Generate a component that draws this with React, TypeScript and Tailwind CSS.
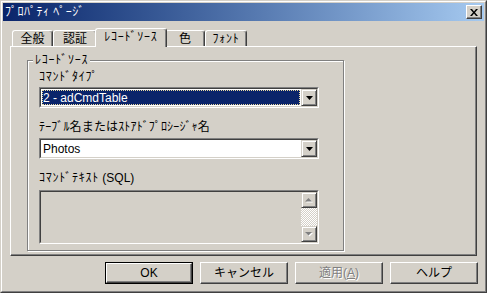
import React from 'react';

const face = 'bg-[#d4d0c8]';

function DownArrow({ disabled = false }: { disabled?: boolean }) {
    if (disabled) {
        return (
            <svg width="8" height="5" viewBox="0 0 8 5">
                <path d="M1 1h7L4.5 4.5z" fill="#ffffff" />
                <path d="M0 0h7L3.5 3.5z" fill="#808080" />
            </svg>
        );
    }
    return (
        <svg width="7" height="4" viewBox="0 0 7 4">
            <path d="M0 0h7L3.5 4z" fill="#000000" />
        </svg>
    );
}

function UpArrow() {
    return (
        <svg width="8" height="5" viewBox="0 0 8 5">
            <path d="M1 4.5h7L4.5 1z" fill="#ffffff" />
            <path d="M0 3.5h7L3.5 0z" fill="#808080" />
        </svg>
    );
}

// raised little button used by combos / scrollbars
function SmallButton({ children, className = '' }: { children: React.ReactNode; className?: string }) {
    return (
        <div
            className={`w-[16px] flex items-center justify-center ${face} border border-t-[#d4d0c8] border-l-[#d4d0c8] border-r-[#404040] border-b-[#404040] shadow-[inset_1px_1px_0_#ffffff,inset_-1px_-1px_0_#808080] ${className}`}
        >
            {children}
        </div>
    );
}

function Sunken({ className = '', children }: { className?: string; children: React.ReactNode }) {
    return (
        <div className={`border border-t-[#808080] border-l-[#808080] border-r-white border-b-white ${className}`}>
            <div className="h-full flex border border-t-[#404040] border-l-[#404040] border-r-[#d4d0c8] border-b-[#d4d0c8]">
                {children}
            </div>
        </div>
    );
}

function Tab({ label, width, active = false, kana = false }: { label: string; width: string; active?: boolean; kana?: boolean }) {
    return (
        <div
            className={`${width} ${
                active ? 'h-[19px] -mb-px -mx-[2px] relative z-10 pb-[3px]' : 'h-[16px]'
            } ${kana ? 'tracking-[0.75px]' : ''} ${face} flex items-center justify-center rounded-t-[3px] border-l border-t border-r border-l-white border-t-white border-r-[#404040] shadow-[inset_-1px_0_0_#808080] leading-[14px]`}
        >
            {label}
        </div>
    );
}

function PushButton({
    children,
    isDefault = false,
    disabled = false,
}: {
    children: React.ReactNode;
    isDefault?: boolean;
    disabled?: boolean;
}) {
    const inner = (
        <div className="h-full flex items-center justify-center border border-t-white border-l-white border-r-[#404040] border-b-[#404040] shadow-[inset_-1px_-1px_0_#808080] leading-[14px]">
            <span className={disabled ? 'text-[#808080] [text-shadow:1px_1px_0_#ffffff]' : ''}>{children}</span>
        </div>
    );
    return (
        <div className={`w-[88px] h-[22px] ${isDefault ? 'border border-black' : ''}`}>{inner}</div>
    );
}

export default function App() {
    return (
        <div className="w-[487px] h-[293px] bg-[#d4d0c8] text-[12px] text-black font-['Liberation_Sans','Noto_Sans_CJK_JP',sans-serif] border border-t-[#d4d0c8] border-l-[#d4d0c8] border-r-[#404040] border-b-[#404040]">
            <div className="h-full border border-t-white border-l-white border-r-[#808080] border-b-[#808080] p-px flex flex-col">
                {/* Title bar */}
                <div className="h-[18px] flex items-center bg-gradient-to-r from-[#0a246a] to-[#a6caf0] pl-[2px] pr-[2px]">
                    <span className="text-white leading-[14px] tracking-[0.5px]">ﾌﾟﾛﾊﾟﾃｨ ﾍﾟｰｼﾞ</span>
                    <div className="ml-auto w-[16px] h-[14px] flex items-center justify-center bg-[#d4d0c8] border border-t-white border-l-white border-r-[#404040] border-b-[#404040] shadow-[inset_-1px_-1px_0_#808080]">
                        <svg width="8" height="7" viewBox="0 0 8 7">
                            <path d="M0 0h2l2 2.5L6 0h2L5 3.5 8 7H6L4 4.5 2 7H0l3-3.5z" fill="#000" />
                        </svg>
                    </div>
                </div>

                {/* Tabs + panel */}
                <div className="px-[7px] pt-[7px]">
                    <div className="h-[18px] flex items-end pl-[2px]">
                        <Tab label="全般" width="w-[41px]" />
                        <Tab label="認証" width="w-[44px]" />
                        <Tab label="ﾚｺｰﾄﾞｿｰｽ" width="w-[72px]" active kana />
                        <Tab label="色" width="w-[40px]" />
                        <Tab label="ﾌｫﾝﾄ" width="w-[42px]" kana />
                    </div>
                    <div className="h-[210px] border-l border-t border-r border-b border-l-white border-t-white border-r-[#404040] border-b-[#404040] shadow-[inset_-1px_-1px_0_#808080] pl-[16px] pt-[13px]">
                        {/* Group box */}
                        <div className="relative w-[317px] h-[191px] border border-[#808080] shadow-[inset_1px_1px_0_#ffffff,1px_1px_0_#ffffff] pl-[11px] pt-[9px] flex flex-col">
                            <span className={`absolute left-[5px] top-[-8px] px-[2px] ${face} leading-[14px] tracking-[0.75px]`}>ﾚｺｰﾄﾞｿｰｽ</span>

                            <div className="leading-[14px] tracking-[0.75px]">ｺﾏﾝﾄﾞﾀｲﾌﾟ</div>
                            <Sunken className="mt-[3px] w-[280px] h-[21px] bg-white">
                                <div className="flex-1 p-px">
                                    <div className="h-full bg-[#0a246a] text-white border border-dotted border-[#e8d8a0] flex items-center leading-[14px]">
                                        2 - adCmdTable
                                    </div>
                                </div>
                                <SmallButton>
                                    <DownArrow />
                                </SmallButton>
                            </Sunken>

                            <div className="mt-[12px] leading-[14px] tracking-[0.15px]">ﾃｰﾌﾞﾙ名またはｽﾄｱﾄﾞﾌﾟﾛｼｰｼﾞｬ名</div>
                            <Sunken className="mt-[4px] w-[280px] h-[21px] bg-white">
                                <div className="flex-1 flex items-center pl-[2px] leading-[14px]">Photos</div>
                                <SmallButton>
                                    <DownArrow />
                                </SmallButton>
                            </Sunken>

                            <div className="mt-[12px] leading-[14px]">
                                <span className="tracking-[0.75px]">ｺﾏﾝﾄﾞﾃｷｽﾄ</span> (SQL)
                            </div>
                            <Sunken className={`mt-[5px] w-[280px] h-[54px] ${face}`}>
                                <div className="flex-1" />
                                <div className="w-[16px] flex flex-col">
                                    <SmallButton className="h-[16px]">
                                        <UpArrow />
                                    </SmallButton>
                                    <div className="flex-1 bg-[image:repeating-conic-gradient(#ffffff_0_25%,#d4d0c8_0_50%)] bg-[length:2px_2px]" />
                                    <SmallButton className="h-[16px]">
                                        <DownArrow disabled />
                                    </SmallButton>
                                </div>
                            </Sunken>
                        </div>
                    </div>
                </div>

                {/* Buttons */}
                <div className="mt-[6px] flex justify-end gap-[7px] pr-[6px]">
                    <PushButton isDefault>OK</PushButton>
                    <PushButton>キャンセル</PushButton>
                    <PushButton disabled>
                        適用(<span className="underline">A</span>)
                    </PushButton>
                    <PushButton>ヘルプ</PushButton>
                </div>
            </div>
        </div>
    );
}
